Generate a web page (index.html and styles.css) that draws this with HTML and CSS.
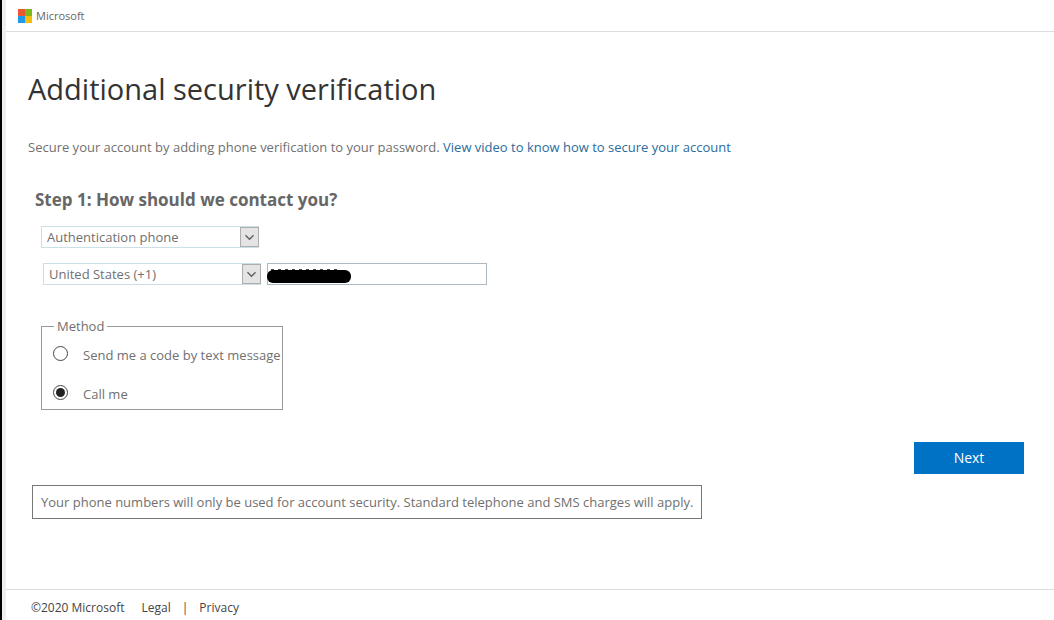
FILE: index.html
```html
<!DOCTYPE html>
<html lang="en">
<head>
    <meta charset="utf-8">
    <title>Additional security verification</title>
    <meta name="viewport" content="width=device-width, initial-scale=1.0">
    <link rel="stylesheet" href="styles.css">
</head>
<body>
    <!-- Header -->
    <header class="header">
        <svg class="logo" viewBox="0 0 14 14" aria-hidden="true">
            <rect x="0" y="0" width="7" height="7" fill="#e8592f"/>
            <rect x="7" y="0" width="7" height="7" fill="#7db71b"/>
            <rect x="0" y="7" width="7" height="7" fill="#1d9bea"/>
            <rect x="7" y="7" width="7" height="7" fill="#f7bd0b"/>
        </svg>
        <span class="brand">Microsoft</span>
    </header>

    <!-- Main content -->
    <main class="content">
        <h1>Additional security verification</h1>
        <p class="intro">Secure your account by adding phone verification to your password. <a href="#">View video to know how to secure your account</a></p>

        <form class="contact-form">
            <h2>Step 1: How should we contact you?</h2>

            <div class="row">
                <div class="select">
                    <select aria-label="Contact method">
                        <option>Authentication phone</option>
                    </select>
                    <svg class="arrow" viewBox="0 0 19 20" aria-hidden="true"><path d="M5 8l4.500 4.500L14 8"/></svg>
                </div>
            </div>

            <div class="row phone-row">
                <div class="select">
                    <select aria-label="Country or region">
                        <option>United States (+1)</option>
                    </select>
                    <svg class="arrow" viewBox="0 0 19 20" aria-hidden="true"><path d="M5 8l4.500 4.500L14 8"/></svg>
                </div>
                <div class="phone">
                    <input type="tel" aria-label="Phone number">
                    <svg class="redacted" viewBox="0 0 84 14" aria-hidden="true">
                        <path class="dots" d="M4 1H70"/>
                        <rect x="0" y="1" width="84" height="13" rx="6"/>
                    </svg>
                </div>
            </div>

            <fieldset class="method">
                <legend>Method</legend>
                <label><input type="radio" name="method"><span>Send me a code by text message</span></label>
                <label><input type="radio" name="method" checked><span>Call me</span></label>
            </fieldset>

            <div class="actions">
                <button type="button">Next</button>
            </div>
        </form>

        <p class="notice">Your phone numbers will only be used for account security. Standard telephone and SMS charges will apply.</p>
    </main>

    <!-- Footer -->
    <footer class="footer">
        <span class="copyright">©2020 Microsoft</span>
        <a href="#">Legal</a>
        <span class="divider">|</span>
        <a href="#">Privacy</a>
    </footer>
</body>
</html>
```
FILE: styles.css
```css
* {
    box-sizing: border-box;
}

html {
    background: #fff;
    border-left: 2px solid #000;
}

body {
    margin: 0;
    min-height: 100vh;
    display: flex;
    flex-direction: column;
    border-left: 4px solid #efefef;
    color: #707070;
    font-family: "Open Sans", "Noto Sans", sans-serif;
    font-size: 13px;
    line-height: 18px;
}

a {
    color: #2a6c9c;
    text-decoration: none;
}

/* Header */
.header {
    display: flex;
    align-items: center;
    gap: 4px;
    height: 32px;
    padding-left: 12px;
    border-bottom: 1px solid #dcdfe1;
}

.logo {
    width: 14px;
    height: 14px;
}

.brand {
    font-size: 11px;
    font-weight: 500;
    color: #666;
}

/* Main content */
.content {
    flex: 1;
    padding: 35px 30px 0 22px;
}

h1 {
    margin: 0;
    font-size: 29px;
    line-height: 44px;
    font-weight: 400;
    color: #333;
}

.intro {
    margin: 27px 0 0;
}

.contact-form {
    margin-top: 32px;
    padding-left: 7px;
}

h2 {
    margin: 0;
    font-size: 17px;
    line-height: 24px;
    font-weight: 700;
    color: #666;
}

.row {
    display: flex;
    gap: 6px;
    margin: 14px 0 0 6px;
}

.phone-row {
    margin: 15px 0 0 8px;
}

/* Drop-downs */
.select {
    position: relative;
    width: 218px;
    height: 22px;
}

.select select {
    appearance: none;
    width: 100%;
    height: 22px;
    padding: 0 22px 0 5px;
    border: 1px solid #cbdfe8;
    border-radius: 0;
    background: #fff;
    color: #707070;
    font: inherit;
}

.arrow {
    position: absolute;
    top: 1px;
    right: 0;
    width: 19px;
    height: 20px;
    background: #e4e4e4;
    border: 1px solid #adadad;
    fill: none;
    stroke: #606060;
    stroke-width: 1.5;
    pointer-events: none;
}

/* Phone number */
.phone {
    position: relative;
    width: 220px;
    height: 22px;
}

.phone input {
    width: 100%;
    height: 22px;
    padding: 0 4px;
    border: 1px solid #b0b9c0;
    background: #fff;
    color: #333;
    font: inherit;
}

.redacted {
    position: absolute;
    left: 0;
    top: 6px;
    width: 84px;
    height: 14px;
    pointer-events: none;
}

.redacted .dots {
    stroke: #444;
    stroke-width: 2;
    stroke-dasharray: 3 4;
}

/* Contact method */
.method {
    display: flex;
    flex-direction: column;
    gap: 21px;
    width: 242px;
    margin: 32px 0 0 6px;
    padding: 11px 0 6px 11px;
    border: 1px solid #999;
}

.method legend {
    margin-left: 1px;
    padding: 0 3px;
}

.method label {
    display: flex;
    align-items: flex-start;
    gap: 15px;
    white-space: nowrap;
}

.method input {
    appearance: none;
    display: grid;
    place-items: center;
    width: 15px;
    height: 15px;
    margin: 0;
    border: 1px solid #444;
    border-radius: 50%;
    background: #fff;
}

.method input:checked::before {
    content: "";
    width: 9px;
    height: 9px;
    border-radius: 50%;
    background: #222;
}

/* Next */
.actions {
    display: flex;
    justify-content: flex-end;
    margin-top: 32px;
}

.actions button {
    width: 110px;
    height: 32px;
    padding: 0;
    border: none;
    background: #0072c6;
    color: #fff;
    font: inherit;
    font-size: 14px;
    cursor: pointer;
}

.notice {
    width: fit-content;
    margin: 11px 0 0 4px;
    padding: 7px 8px;
    border: 1px solid #777;
}

/* Footer */
.footer {
    display: flex;
    gap: 11px;
    padding: 9px 25px 3px;
    border-top: 1px solid #dcdcdc;
    font-size: 12px;
    color: #444;
}

.footer a {
    color: #444;
}

.copyright {
    margin-right: 6px;
}
```
